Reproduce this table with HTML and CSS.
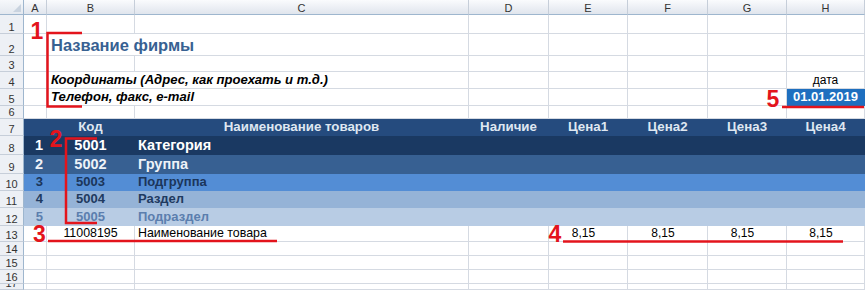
FILE: index.html
```html
<!DOCTYPE html>
<html lang="ru">
<head>
<meta charset="utf-8">
<title>Прайс-лист</title>
<link rel="stylesheet" href="styles.css">
</head>
<body>
<div class="wrap">
  <div class="sheet">
    <div class="corner"><span class="tri"></span></div>
    <div class="hd">A</div><div class="hd">B</div><div class="hd">C</div><div class="hd">D</div><div class="hd">E</div><div class="hd">F</div><div class="hd">G</div><div class="hd">H</div>

    <div class="rh">1</div><div class="c"></div><div class="c"></div><div class="c"></div><div class="c"></div><div class="c"></div><div class="c"></div><div class="c"></div><div class="c"></div>

    <div class="rh">2</div><div class="c"></div><div class="c span2 title">Название фирмы</div><div class="c"></div><div class="c"></div><div class="c"></div><div class="c"></div><div class="c"></div>

    <div class="rh">3</div><div class="c"></div><div class="c"></div><div class="c"></div><div class="c"></div><div class="c"></div><div class="c"></div><div class="c"></div><div class="c"></div>

    <div class="rh">4</div><div class="c"></div><div class="c span2 info">Координаты (Адрес, как проехать и т.д.)</div><div class="c"></div><div class="c"></div><div class="c"></div><div class="c"></div><div class="c mid">дата</div>

    <div class="rh">5</div><div class="c"></div><div class="c span2 info">Телефон, факс, e-mail</div><div class="c"></div><div class="c"></div><div class="c"></div><div class="c"></div><div class="c mid date">01.01.2019</div>

    <div class="rh">6</div><div class="c"></div><div class="c"></div><div class="c"></div><div class="c"></div><div class="c"></div><div class="c"></div><div class="c"></div><div class="c"></div>

    <div class="rh">7</div>
    <div class="c r7"></div><div class="c r7 mid">Код</div><div class="c r7 mid">Наименование товаров</div><div class="c r7 mid">Наличие</div><div class="c r7 mid">Цена1</div><div class="c r7 mid">Цена2</div><div class="c r7 mid">Цена3</div><div class="c r7 mid">Цена4</div>

    <div class="rh">8</div>
    <div class="c r8 num">1</div><div class="c r8 mid">5001</div><div class="c r8 name">Категория</div><div class="c r8"></div><div class="c r8"></div><div class="c r8"></div><div class="c r8"></div><div class="c r8"></div>

    <div class="rh">9</div>
    <div class="c r9 num">2</div><div class="c r9 mid">5002</div><div class="c r9 name">Группа</div><div class="c r9"></div><div class="c r9"></div><div class="c r9"></div><div class="c r9"></div><div class="c r9"></div>

    <div class="rh">10</div>
    <div class="c r10 num">3</div><div class="c r10 mid">5003</div><div class="c r10 name">Подгруппа</div><div class="c r10"></div><div class="c r10"></div><div class="c r10"></div><div class="c r10"></div><div class="c r10"></div>

    <div class="rh">11</div>
    <div class="c r11 num">4</div><div class="c r11 mid">5004</div><div class="c r11 name">Раздел</div><div class="c r11"></div><div class="c r11"></div><div class="c r11"></div><div class="c r11"></div><div class="c r11"></div>

    <div class="rh">12</div>
    <div class="c r12 num">5</div><div class="c r12 mid">5005</div><div class="c r12 name">Подраздел</div><div class="c r12"></div><div class="c r12"></div><div class="c r12"></div><div class="c r12"></div><div class="c r12"></div>

    <div class="rh">13</div>
    <div class="c"></div><div class="c mid item">11008195</div><div class="c name item">Наименование товара</div><div class="c"></div><div class="c mid price">8,15</div><div class="c mid price">8,15</div><div class="c mid price">8,15</div><div class="c mid price">8,15</div>

    <div class="rh">14</div><div class="c"></div><div class="c"></div><div class="c"></div><div class="c"></div><div class="c"></div><div class="c"></div><div class="c"></div><div class="c"></div>
    <div class="rh">15</div><div class="c"></div><div class="c"></div><div class="c"></div><div class="c"></div><div class="c"></div><div class="c"></div><div class="c"></div><div class="c"></div>
    <div class="rh">16</div><div class="c"></div><div class="c"></div><div class="c"></div><div class="c"></div><div class="c"></div><div class="c"></div><div class="c"></div><div class="c"></div>
    <div class="rh">17</div><div class="c"></div><div class="c"></div><div class="c"></div><div class="c"></div><div class="c"></div><div class="c"></div><div class="c"></div><div class="c"></div>
  </div>

  <svg class="marks" width="865" height="290" viewBox="0 0 865 290">
    <polyline points="82,33 47.5,33 47.5,106.5 82,106.5"/>
    <polyline points="97,138.5 66,138.5 66,223 97,223"/>
    <line x1="48" y1="241" x2="277" y2="241"/>
    <line x1="563" y1="241.5" x2="843" y2="241.5"/>
    <line x1="782" y1="107" x2="864" y2="107"/>
    <text x="37" y="39">1</text>
    <text x="56" y="147">2</text>
    <text x="39.5" y="242">3</text>
    <text x="555" y="242">4</text>
    <text x="773" y="107">5</text>
  </svg>
</div>
</body>
</html>
```

FILE: styles.css
```css
html, body {
  margin: 0;
  padding: 0;
  background: #ffffff;
}

body {
  width: 865px;
  height: 290px;
  overflow: hidden;
  font-family: "Liberation Sans", Arial, sans-serif;
}

.wrap {
  position: relative;
  width: 865px;
  height: 290px;
  overflow: hidden;
}

.sheet {
  display: grid;
  grid-template-columns: 24px 23px 88px 334px 80px 79px 80px 79px 78px;
  grid-template-rows: 15px 19px 22px 16px 17px 17px 13px 17px 19px 19px 17px 17px 18px 16px 14px 14px 14px 6px;
}

.sheet > div {
  box-sizing: border-box;
  display: flex;
  align-items: flex-end;
  overflow: hidden;
  white-space: nowrap;
  min-width: 0;
}

/* column headers */
.corner {
  position: relative;
  background: linear-gradient(#f6f8fb, #e3e8ef);
  border-right: 1px solid #9eb6ce;
  border-bottom: 1px solid #9eb6ce;
}

.tri {
  position: absolute;
  right: 2px;
  bottom: 2px;
  width: 0;
  height: 0;
  border-left: 8px solid transparent;
  border-bottom: 8px solid #c9d3df;
}

.hd {
  justify-content: center;
  background: linear-gradient(#fafbfd, #e0e5ed);
  border-right: 1px solid #c6ced9;
  border-bottom: 1px solid #9eb6ce;
  color: #333;
  font-size: 11px;
  line-height: 12px;
}

/* row headers */
.rh {
  justify-content: center;
  background: #edf0f5;
  border-right: 1px solid #9eb6ce;
  border-bottom: 1px solid #c6ced9;
  color: #333;
  font-size: 11px;
  line-height: 12px;
}

/* cells */
.c {
  border-right: 1px solid #d5dae2;
  border-bottom: 1px solid #d5dae2;
  padding: 0 3px 1px;
  font-size: 12px;
  line-height: 14px;
  color: #000;
}

.span2 {
  grid-column: span 2;
}

.mid {
  justify-content: center;
}

.num {
  justify-content: flex-end;
}

.title {
  font-size: 16.5px;
  line-height: 18px;
  font-weight: bold;
  color: #376192;
  padding-left: 4px;
}

.info {
  font-size: 13.1px;
  line-height: 15px;
  font-weight: bold;
  font-style: italic;
  padding-left: 4px;
}

.date {
  background: #1e6fbf;
  border-color: #1e6fbf;
  color: #ffffff;
  font-weight: bold;
  font-size: 13px;
  line-height: 15px;
}

.item {
  font-size: 12.4px;
}

.price {
  padding-right: 12px;
}

/* coloured table rows */
.r7, .r8, .r9, .r10, .r11, .r12 {
  border-color: transparent;
  font-weight: bold;
}

.r7 {
  background: #254b7e;
  color: #dfe7f1;
  font-size: 13.3px;
  line-height: 15px;
}

.r8 {
  background: #1a3962;
  color: #ffffff;
  font-size: 14.5px;
  line-height: 16px;
}

.r9 {
  background: #376092;
  color: #eef2f8;
  font-size: 14.5px;
  line-height: 16px;
}

.r10 {
  background: #538dd5;
  color: #1b355a;
  font-size: 13px;
  line-height: 15px;
}

.r11 {
  background: #95b3d7;
  color: #1f3a60;
  font-size: 13px;
  line-height: 15px;
}

.r12 {
  background: #b8cce4;
  color: #5b7eae;
  font-size: 13px;
  line-height: 15px;
}

/* red annotation overlay */
.marks {
  position: absolute;
  left: 0;
  top: 0;
  pointer-events: none;
}

.marks polyline,
.marks line {
  fill: none;
  stroke: #e3141c;
  stroke-width: 2.5;
}

.marks text {
  fill: #e3141c;
  font-family: "Liberation Sans", Arial, sans-serif;
  font-weight: bold;
  font-size: 23px;
  text-anchor: middle;
}
```
